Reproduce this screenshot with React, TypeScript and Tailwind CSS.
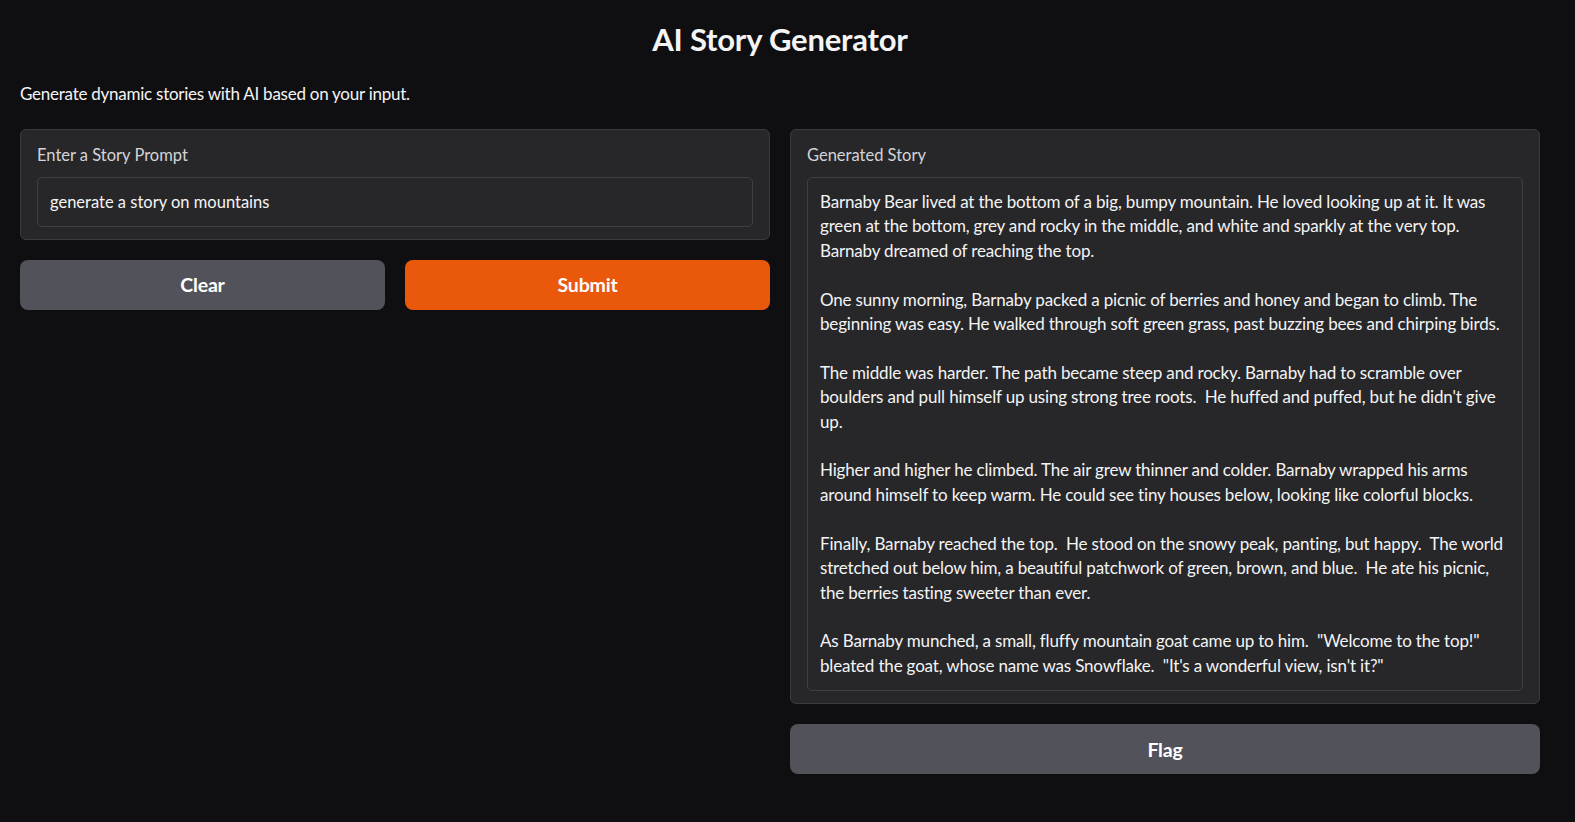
const STORY = `Barnaby Bear lived at the bottom of a big, bumpy mountain. He loved looking up at it. It was green at the bottom, grey and rocky in the middle, and white and sparkly at the very top. Barnaby dreamed of reaching the top.

One sunny morning, Barnaby packed a picnic of berries and honey and began to climb. The beginning was easy. He walked through soft green grass, past buzzing bees and chirping birds.

The middle was harder. The path became steep and rocky. Barnaby had to scramble over boulders and pull himself up using strong tree roots.  He huffed and puffed, but he didn't give up.

Higher and higher he climbed. The air grew thinner and colder. Barnaby wrapped his arms around himself to keep warm. He could see tiny houses below, looking like colorful blocks.

Finally, Barnaby reached the top.  He stood on the snowy peak, panting, but happy.  The world stretched out below him, a beautiful patchwork of green, brown, and blue.  He ate his picnic, the berries tasting sweeter than ever.

As Barnaby munched, a small, fluffy mountain goat came up to him.  "Welcome to the top!" bleated the goat, whose name was Snowflake.  "It's a wonderful view, isn't it?"`;

export default function App() {
  return (
    <div className="min-h-[822px] bg-[#0f0f11] text-[#f4f4f5] font-['Lato','Noto_Sans',sans-serif]">
      <div className="w-[1540px] pl-5 pt-[18px]">
        {/* Header */}
        <h1 className="text-center text-[31px] leading-[42px] font-bold tracking-[-0.2px]">
          AI Story Generator
        </h1>
        <p className="mt-[22px] text-[17px] leading-6 tracking-[-0.25px]">
          Generate dynamic stories with AI based on your input.
        </p>

        <div className="mt-[23px] grid grid-cols-2 gap-5 items-start">
          {/* Left column */}
          <div className="flex flex-col gap-5">
            <div className="rounded-md border border-[#3a3a40] bg-[#27272a] px-4 pt-[13px] pb-3">
              <div className="text-[16.5px] leading-6 text-[#d4d4d8]">Enter a Story Prompt</div>
              <div className="mt-[10px] h-[50px] flex items-center rounded-[5px] border border-[#3f3f46] bg-[#27272a] px-3 text-[16.5px]">
                generate a story on mountains
              </div>
            </div>
            <div className="grid grid-cols-2 gap-5">
              <button className="h-[50px] rounded-lg bg-[#52525b] text-[19.5px] font-bold tracking-[-0.2px] text-white">
                Clear
              </button>
              <button className="h-[50px] rounded-lg bg-[#ea580c] text-[19.5px] font-bold tracking-[-0.2px] text-white">
                Submit
              </button>
            </div>
          </div>

          {/* Right column */}
          <div className="flex flex-col gap-5">
            <div className="rounded-md border border-[#3a3a40] bg-[#27272a] px-4 pt-[13px] pb-3">
              <div className="text-[16.5px] leading-6 text-[#d4d4d8]">Generated Story</div>
              <div className="mt-[10px] rounded-[5px] border border-[#3f3f46] bg-[#27272a] px-3 pt-3 pb-3 text-[17px] leading-[24.4px] whitespace-pre-wrap tracking-[-0.17px]">
                {STORY}
              </div>
            </div>
            <button className="h-[50px] rounded-lg bg-[#52525b] text-[19.5px] font-bold tracking-[-0.2px] text-white">
              Flag
            </button>
          </div>
        </div>
      </div>
    </div>
  );
}
